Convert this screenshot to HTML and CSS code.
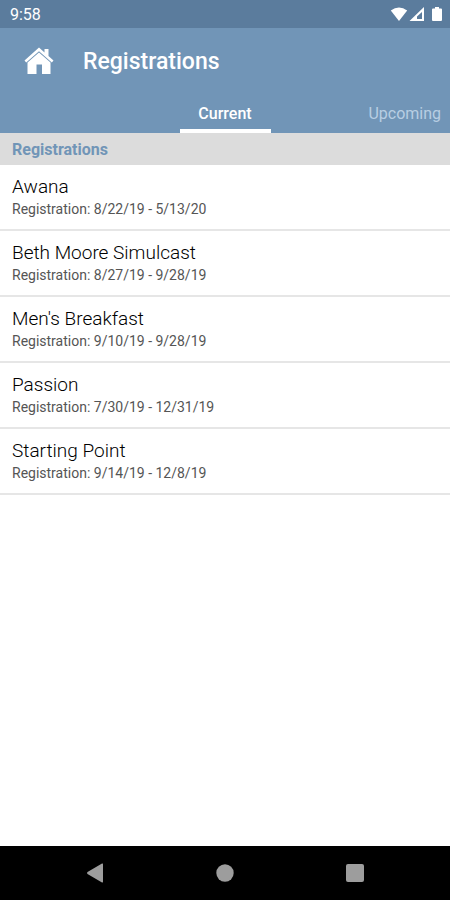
FILE: index.html
```html
<!DOCTYPE html>
<html lang="en">
<head>
<meta charset="utf-8">
<meta name="viewport" content="width=device-width, initial-scale=1">
<title>Registrations</title>
<link rel="stylesheet" href="styles.css">
</head>
<body>
<div class="status">
  <time>9:58</time>
  <svg class="status-icons" width="52" height="16" viewBox="0 0 52 16" aria-hidden="true">
    <path d="M0.800 4.500Q9 -1.500 17.200 4.500L9 15Z"/>
    <path fill-rule="evenodd" d="M34 1V15H19.500ZM32 6L27 10.500V13H32Z"/>
    <path d="M43 2.500h2V1h4v1.500h2a1 1 0 0 1 1 1V14a1 1 0 0 1-1 1h-8a1 1 0 0 1-1-1V3.500a1 1 0 0 1 1-1Z"/>
  </svg>
</div>
<header class="header">
  <div class="toolbar">
    <a class="home" href="#" aria-label="Home">
      <svg width="30" height="28" viewBox="0 0 30 28" aria-hidden="true">
        <path d="M15 0.500L20.500 5.500V2H24.500V9L29.500 13.500L27.800 15.500L15 4.200L2.200 15.500L0.500 13.500Z"/>
        <path d="M15 5.400L26.500 15.500V27H18V17.500H12.500V27H3.500V15.500Z"/>
      </svg>
    </a>
    <h1 class="title">Registrations</h1>
  </div>
  <nav class="tabs" aria-label="Registration periods">
    <a class="tab tab-current" href="#" aria-current="page">Current</a>
    <a class="tab tab-next" href="#">Upcoming</a>
  </nav>
</header>
<main class="content">
  <h2 class="section">Registrations</h2>
  <ul class="list">
    <li class="item"><div class="name">Awana</div><div class="dates">Registration: 8/22/19 - 5/13/20</div></li>
    <li class="item"><div class="name">Beth Moore Simulcast</div><div class="dates">Registration: 8/27/19 - 9/28/19</div></li>
    <li class="item"><div class="name">Men's Breakfast</div><div class="dates">Registration: 9/10/19 - 9/28/19</div></li>
    <li class="item"><div class="name">Passion</div><div class="dates">Registration: 7/30/19 - 12/31/19</div></li>
    <li class="item"><div class="name">Starting Point</div><div class="dates">Registration: 9/14/19 - 12/8/19</div></li>
  </ul>
</main>
<footer class="system-nav">
  <button class="nav-button" type="button" aria-label="Back"><svg width="20" height="20" viewBox="0 0 20 20"><path d="M18 1.200V18.800Q18 20 17 19.400L2.500 11Q1.500 10 2.500 9L17 0.600Q18 0 18 1.200Z"/></svg></button>
  <button class="nav-button" type="button" aria-label="Home screen"><svg width="20" height="20" viewBox="0 0 20 20"><circle cx="10" cy="10" r="8.700"/></svg></button>
  <button class="nav-button" type="button" aria-label="Recent apps"><svg width="20" height="20" viewBox="0 0 20 20"><rect x="1" y="1" width="18" height="18" rx="2"/></svg></button>
</footer>
</body>
</html>
```
FILE: styles.css
```css
* {
  box-sizing: border-box;
}

body {
  margin: 0;
  min-height: 100vh;
  display: flex;
  flex-direction: column;
  background: #fff;
  color: #222;
  font-family: Roboto, "Liberation Sans", sans-serif;
}

a {
  color: inherit;
  text-decoration: none;
}

svg {
  display: block;
  fill: currentColor;
}

.status {
  display: flex;
  align-items: center;
  justify-content: space-between;
  height: 28px;
  padding: 0 8px 0 10px;
  background: #5b7c9d;
  color: #fff;
  font-size: 16px;
}

.header {
  background: #7195b7;
  color: #fff;
}

.toolbar {
  display: flex;
  align-items: center;
  gap: 29px;
  height: 66px;
  padding: 0 24px;
}

.title {
  margin: 0;
  font-size: 23px;
  font-weight: 500;
}

.tabs {
  display: grid;
  grid-template-columns: 1fr 91px 1fr;
  height: 39px;
  font-size: 16px;
}

.tab {
  display: flex;
  align-items: center;
  padding-top: 4px;
  border-bottom: 4px solid transparent;
}

.tab-current {
  grid-column: 2;
  justify-content: center;
  border-color: #fff;
  font-weight: 500;
}

.tab-next {
  justify-content: flex-end;
  padding-right: 9px;
  color: #b8cee3;
}

.content {
  flex: 1;
}

.section {
  margin: 0;
  padding: 2px 12px 0;
  background: #dcdcdc;
  color: #7195b7;
  font-size: 16px;
  font-weight: 700;
  line-height: 30px;
}

.list {
  margin: 0;
  padding: 0;
  list-style: none;
}

.item {
  height: 66px;
  padding: 10px 12px 0;
  border-bottom: 2px solid #e6e6e6;
}

.name {
  color: #000;
  font-size: 19px;
  font-weight: 300;
  line-height: 24px;
}

.dates {
  color: #555;
  font-size: 14px;
  line-height: 20px;
}

.system-nav {
  display: flex;
  height: 54px;
  padding: 0 30px;
  background: #000;
  color: #9d9d9d;
}

.nav-button {
  flex: 1;
  display: flex;
  align-items: center;
  justify-content: center;
  padding: 0;
  border: 0;
  background: none;
  color: inherit;
}
```
